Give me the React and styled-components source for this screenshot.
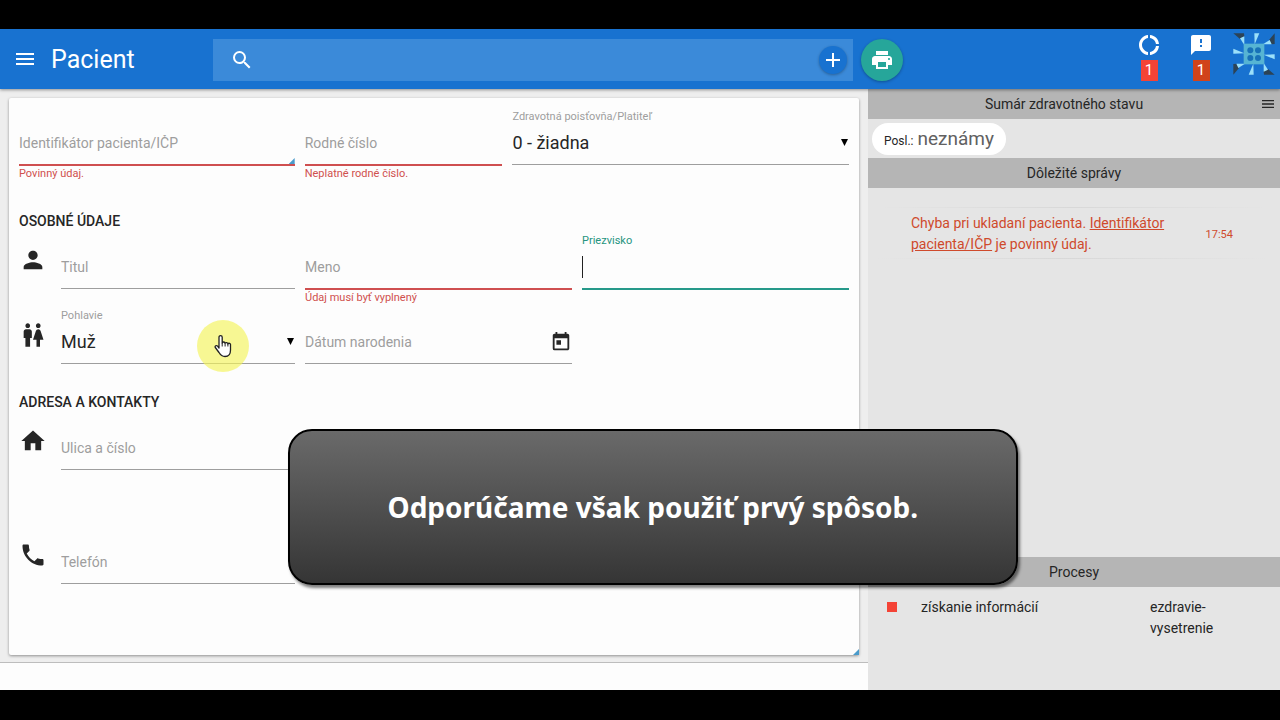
import React, { useState } from "react";
import styled, { createGlobalStyle, css } from "styled-components";
import {
  MdAdd,
  MdDonutLarge,
  MdFeedback,
  MdHome,
  MdMenu,
  MdPerson,
  MdPhone,
  MdPrint,
  MdSearch,
  MdToday,
  MdWc,
} from "react-icons/md";

const GlobalStyle = createGlobalStyle`
  * {
    box-sizing: border-box;
  }
  body {
    margin: 0;
    background: #000;
    color: #262626;
    font-family: Roboto, "Noto Sans", sans-serif;
    font-size: 14px;
  }
  button, input, select {
    font-family: inherit;
    border: 0;
    padding: 0;
    margin: 0;
    background: transparent;
    border-radius: 0;
    outline: none;
  }
`;

const Page = styled.div`
  position: relative;
  display: flex;
  flex-direction: column;
  min-height: 100vh;
  padding: 29px 0 30px;
`;

const Header = styled.header`
  position: relative;
  z-index: 1;
  display: flex;
  align-items: center;
  height: 60px;
  background: #1872d0;
  color: white;
  box-shadow: 0 1px 3px rgba(0, 0, 0, 0.4);
`;

const Brand = styled.div`
  display: flex;
  align-items: center;
  gap: 14px;
  width: 213px;
  padding-left: 13px;
`;

const IconButton = styled.button`
  display: flex;
  align-items: center;
  justify-content: center;
  color: inherit;
`;

const Title = styled.h1`
  margin: 0;
  font-size: 25px;
  font-weight: 400;
`;

const Search = styled.label`
  display: flex;
  align-items: center;
  gap: 8px;
  width: 50%;
  height: 42px;
  padding: 0 6px 0 17px;
  margin: 2px 8px 0 0;
  background: #3b8ad9;
`;

const SearchInput = styled.input`
  flex: 1;
  min-width: 0;
  color: white;
  font-size: 18px;
`;

const RoundButton = styled(IconButton)`
  width: ${(props) => props.$size}px;
  height: ${(props) => props.$size}px;
  border-radius: 50%;
  background: ${(props) => props.$color};
  box-shadow: 0 1px 3px rgba(0, 0, 0, 0.3);
`;

const PrintButton = styled(RoundButton)`
  margin-top: 2px;
`;

const StatusList = styled.div`
  display: flex;
  align-self: flex-start;
  gap: 28px;
  margin-left: auto;
  padding: 4px 5px 0 0;
`;

const StatusItem = styled.div`
  display: flex;
  flex-direction: column;
  align-items: center;
  width: 24px;
  gap: 3px;
`;

const Count = styled.span`
  width: 17px;
  height: 21px;
  background: ${(props) => props.$color};
  font-size: 15px;
  line-height: 21px;
  text-align: center;
`;

const LogoBox = styled.div`
  display: flex;
  margin-left: -8px;
`;

const Content = styled.div`
  display: flex;
  flex: 1;
`;

const Main = styled.main`
  display: flex;
  flex-direction: column;
  flex: 1;
  min-width: 0;
  background: #eeeeee;
`;

const Card = styled.form`
  position: relative;
  flex: 1;
  margin: 9px 9px 7px;
  padding: 11px 10px 0;
  background: #fdfdfd;
  border-radius: 2px;
  box-shadow: 0 1px 3px rgba(0, 0, 0, 0.4);
`;

const Footer = styled.footer`
  height: 28px;
  border-top: 1px solid #bdbdbd;
  background: #fdfdfd;
`;

const Corner = styled.span`
  position: absolute;
  right: 0;
  bottom: 0;
  width: 6px;
  height: 6px;
  background: #4a9bcb;
  clip-path: polygon(100% 0, 100% 100%, 0 100%);
`;

const Row = styled.div`
  display: grid;
  grid-template-columns: 32px 234fr 267fr 267fr;
  column-gap: 10px;
  padding-bottom: 3px;
`;

const IdentityRow = styled(Row)`
  grid-template-columns: 276fr 198fr 337fr;
`;

const RowIcon = styled.span`
  display: flex;
  padding-top: 13px;
  font-size: 28px;
`;

const Section = styled.section`
  padding-top: ${(props) => props.$space}px;
`;

const SectionTitle = styled.h2`
  margin: 0;
  padding-bottom: 2px;
  font-size: 14px;
  font-weight: 500;
  line-height: 20px;
  text-transform: uppercase;
`;

const FieldBox = styled.div`
  display: flex;
  flex-direction: column;
  min-width: 0;
`;

const FieldLabel = styled.label`
  height: 16px;
  font-size: 11px;
  line-height: 16px;
  color: ${(props) => (props.$active ? "#26947f" : "#9e9e9e")};
`;

const Control = styled.div`
  position: relative;
  display: flex;
  align-items: center;
  height: 40px;
  padding-bottom: 3px;
  border-bottom: 1px solid #9e9e9e;

  ${(props) =>
    props.$accent &&
    css`
      border-color: ${props.$accent};
      box-shadow: 0 1px 0 ${props.$accent};
    `}
`;

const TextInput = styled.input`
  flex: 1;
  min-width: 0;
  height: 36px;
  color: #212121;
  font-size: 14px;

  &::placeholder {
    color: #9e9e9e;
    opacity: 1;
  }
`;

const Select = styled.select`
  flex: 1;
  height: 36px;
  padding-bottom: 2px;
  appearance: none;
  color: #262626;
  font-size: 18px;
`;

const Arrow = styled.span`
  position: absolute;
  right: 1px;
  top: 14px;
  width: 7px;
  height: 7px;
  background: black;
  clip-path: polygon(0 0, 100% 0, 50% 100%);
  pointer-events: none;
`;

const Caret = styled.span`
  position: absolute;
  left: 0;
  top: 7px;
  width: 1px;
  height: 22px;
  background: #212121;
`;

const Help = styled.span`
  height: 16px;
  font-size: 11px;
  line-height: 17px;
  color: #d0504e;
`;

const Sidebar = styled.aside`
  display: flex;
  flex-direction: column;
  width: 412px;
  background: #e5e5e5;
`;

const PanelTitle = styled.h2`
  display: flex;
  align-items: center;
  height: 30px;
  margin: 0;
  padding-right: ${(props) => (props.$menu ? 4 : 0)}px;
  background: #b5b5b5;
  font-size: 14px;
  font-weight: 400;

  span {
    flex: 1;
    text-align: center;
  }
`;

const Summary = styled.div`
  padding: 4px 4px 3px;
`;

const Chip = styled.div`
  display: inline-flex;
  align-items: baseline;
  gap: 4px;
  height: 32px;
  padding: 0 12px;
  border-radius: 16px;
  background: white;
  font-size: 12px;
  line-height: 32px;

  strong {
    color: #616161;
    font-size: 19px;
    font-weight: 400;
  }
`;

const Messages = styled.div`
  flex: 1;
  padding: 19px 12px 0 10px;
`;

const Rule = styled.div`
  height: 1px;
  background: linear-gradient(to right, #e5e5e5, #d8d8d8, #e5e5e5);
`;

const Message = styled.div`
  display: flex;
  align-items: center;
  justify-content: space-between;
  padding: 5px 35px 3px 33px;
  color: #cf4a2c;
  font-size: 14px;
  line-height: 21px;

  p {
    width: 270px;
    margin: 0;
  }

  a {
    color: inherit;
  }

  time {
    font-size: 11px;
  }
`;

const Processes = styled.ul`
  height: 103px;
  margin: 0;
  padding: 10px 19px;
  list-style: none;
`;

const Process = styled.li`
  display: grid;
  grid-template-columns: 34px 229fr 111fr;
  font-size: 14px;
  line-height: 21px;

  &::before {
    content: "";
    width: 10px;
    height: 10px;
    margin-top: 5px;
    background: #f44336;
  }
`;

const Caption = styled.div`
  position: absolute;
  z-index: 2;
  left: 22.5%;
  top: 429px;
  display: flex;
  align-items: center;
  justify-content: center;
  width: 57%;
  height: 156px;
  border: 2px solid black;
  border-radius: 24px;
  background: linear-gradient(#6a6a6a, #353535);
  box-shadow: 2px 3px 3px rgba(0, 0, 0, 0.5);
  color: white;
  font-family: "Noto Sans", sans-serif;
  font-size: 28px;
  font-weight: 700;
`;

const Pointer = styled.div`
  position: absolute;
  z-index: 2;
  left: 197px;
  top: 320px;
  display: flex;
  align-items: center;
  justify-content: center;
  width: 52px;
  height: 52px;
  border-radius: 50%;
  background: rgba(245, 245, 90, 0.65);
`;

const Logo = () => (
  <svg width="42" height="42" viewBox="14 10 126 126">
    {[0, 90, 180, 270].map((angle) => (
      <g key={angle} transform={`rotate(${angle} 77 73)`}>
        <path d="M15 11H47L48 21L35 28z" fill="#2c4356" />
        <path d="M35 26L48 20V46z" fill="#9be0fa" />
        <path d="M78 11H93L79 44z" fill="#9be0fa" />
      </g>
    ))}
    <rect x="46" y="42" width="62" height="62" fill="#56b4d3" />
    {[66, 89].map((x) =>
      [62, 85].map((y) => (
        <circle key={`${x}-${y}`} cx={x} cy={y} r="9" fill="#1872b8" />
      ))
    )}
  </svg>
);

const Hand = () => (
  <svg width="18" height="24" viewBox="0 0 18 24">
    <path
      d="M5 14V3.2a1.6 1.6 0 0 1 3.2 0V9a1.5 1.5 0 0 1 2.9.3 1.5 1.5 0 0 1 2.8.7 1.4 1.4 0 0 1 2.6.9V16c0 4-2 6.5-5.5 6.5-3.5 0-4.5-1.5-6-4L1.3 13.5c-.8-1.6 1.2-2.6 2.3-1.3z"
      fill="white"
      stroke="#222"
      strokeWidth="1.3"
      strokeLinejoin="round"
    />
    <path d="M8.2 9v3.5M11.1 9.5v3M13.9 10v2.5" stroke="#222" />
  </svg>
);

const Field = ({ id, label, error, active, corner, children }) => {
  const [value, setValue] = useState("");

  return (
    <FieldBox>
      <FieldLabel htmlFor={id} $active={active}>
        {active ? label : ""}
      </FieldLabel>
      <Control $accent={error ? "#cf4f50" : active ? "#26998a" : null}>
        <TextInput
          id={id}
          aria-label={label}
          placeholder={active ? "" : label}
          value={value}
          onChange={(e) => setValue(e.target.value)}
        />
        {active && !value && <Caret />}
        {corner && <Corner />}
        {children}
      </Control>
      <Help>{error}</Help>
    </FieldBox>
  );
};

const SelectField = ({ id, label, options }) => (
  <FieldBox>
    <FieldLabel htmlFor={id}>{label}</FieldLabel>
    <Control>
      <Select id={id}>
        {options.map((option) => (
          <option key={option}>{option}</option>
        ))}
      </Select>
      <Arrow />
    </Control>
  </FieldBox>
);

const App = () => {
  return (
    <>
      <GlobalStyle />
      <Page>
        <Header>
          <Brand>
            <IconButton aria-label="Menu">
              <MdMenu size={24} />
            </IconButton>
            <Title>Pacient</Title>
          </Brand>
          <Search>
            <MdSearch size={24} />
            <SearchInput type="text" aria-label="Hľadať" />
            <RoundButton $size={28} $color="#1872d0" aria-label="Pridať">
              <MdAdd size={24} />
            </RoundButton>
          </Search>
          <PrintButton $size={42} $color="#26a69a" aria-label="Tlačiť">
            <MdPrint size={24} />
          </PrintButton>
          <StatusList>
            <StatusItem>
              <MdDonutLarge size={24} />
              <Count $color="#f44336">1</Count>
            </StatusItem>
            <StatusItem>
              <MdFeedback size={24} />
              <Count $color="#d1431a">1</Count>
            </StatusItem>
            <LogoBox>
              <Logo />
            </LogoBox>
          </StatusList>
        </Header>
        <Content>
          <Main>
            <Card>
              <IdentityRow>
                <Field
                  id="icp"
                  label="Identifikátor pacienta/IČP"
                  error="Povinný údaj."
                  corner
                />
                <Field
                  id="rc"
                  label="Rodné číslo"
                  error="Neplatné rodné číslo."
                />
                <SelectField
                  id="poistovna"
                  label="Zdravotná poisťovňa/Platiteľ"
                  options={["0 - žiadna"]}
                />
              </IdentityRow>
              <Section $space={27}>
                <SectionTitle>Osobné údaje</SectionTitle>
                <Row>
                  <RowIcon>
                    <MdPerson />
                  </RowIcon>
                  <Field id="titul" label="Titul" />
                  <Field id="meno" label="Meno" error="Údaj musí byť vyplnený" />
                  <Field id="priezvisko" label="Priezvisko" active />
                </Row>
                <Row>
                  <RowIcon>
                    <MdWc />
                  </RowIcon>
                  <SelectField
                    id="pohlavie"
                    label="Pohlavie"
                    options={["Muž", "Žena"]}
                  />
                  <Field id="datum" label="Dátum narodenia">
                    <IconButton type="button" aria-label="Kalendár">
                      <MdToday size={22} />
                    </IconButton>
                  </Field>
                </Row>
              </Section>
              <Section $space={9}>
                <SectionTitle>Adresa a kontakty</SectionTitle>
                <Row>
                  <RowIcon>
                    <MdHome />
                  </RowIcon>
                  <Field id="ulica" label="Ulica a číslo" />
                </Row>
              </Section>
              <Section $space={39}>
                <Row>
                  <RowIcon>
                    <MdPhone />
                  </RowIcon>
                  <Field id="telefon" label="Telefón" />
                </Row>
              </Section>
              <Corner />
            </Card>
            <Footer />
          </Main>
          <Sidebar>
            <PanelTitle $menu>
              <span>Sumár zdravotného stavu</span>
              <IconButton aria-label="Možnosti">
                <MdMenu size={16} />
              </IconButton>
            </PanelTitle>
            <Summary>
              <Chip>
                Posl.: <strong>neznámy</strong>
              </Chip>
            </Summary>
            <PanelTitle>
              <span>Dôležité správy</span>
            </PanelTitle>
            <Messages>
              <Rule />
              <Message>
                <p>
                  Chyba pri ukladaní pacienta.{" "}
                  <a href="#icp">Identifikátor pacienta/IČP</a> je povinný údaj.
                </p>
                <time>17:54</time>
              </Message>
              <Rule />
            </Messages>
            <PanelTitle>
              <span>Procesy</span>
            </PanelTitle>
            <Processes>
              <Process>
                <span>získanie informácií</span>
                <span>ezdravie-vysetrenie</span>
              </Process>
            </Processes>
          </Sidebar>
        </Content>
        <Pointer>
          <Hand />
        </Pointer>
        <Caption>Odporúčame však použiť prvý spôsob.</Caption>
      </Page>
    </>
  );
};

export default App;
